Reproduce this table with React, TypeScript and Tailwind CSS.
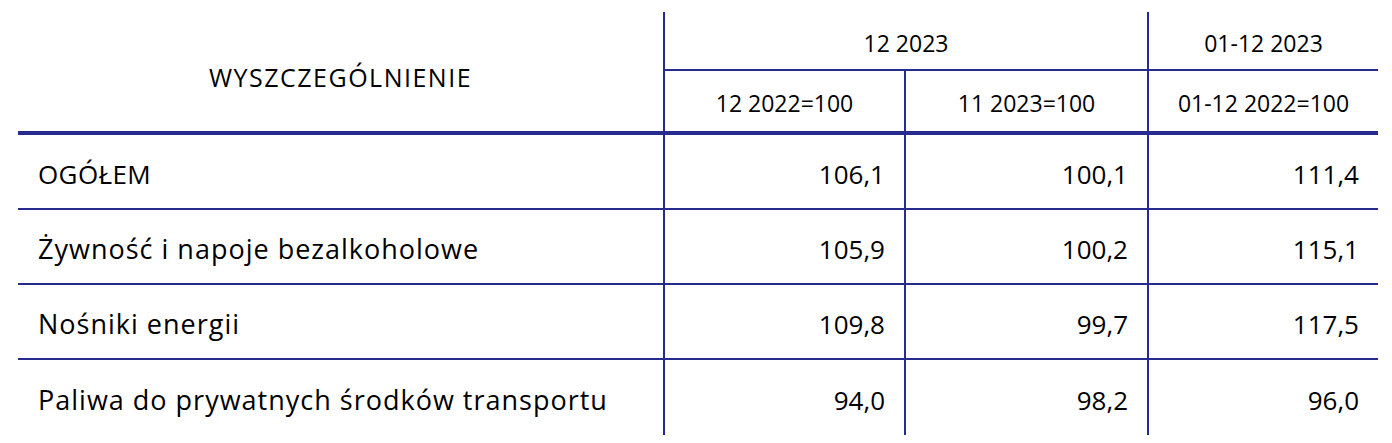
const rows = [
  { label: 'OGÓŁEM', a: '106,1', b: '100,1', c: '111,4', caps: true },
  { label: 'Żywność i napoje bezalkoholowe', a: '105,9', b: '100,2', c: '115,1' },
  { label: 'Nośniki energii', a: '109,8', b: '99,7', c: '117,5' },
  { label: 'Paliwa do prywatnych środków transportu', a: '94,0', b: '98,2', c: '96,0' },
];

export default function App() {
  return (
    <div className="w-[1392px] h-[443px] bg-white overflow-hidden pl-[18px] pt-[12px] text-black font-['Open_Sans',sans-serif]">
      <div className="grid w-[1360px] grid-cols-[645px_241px_243px_231px]">
        {/* header */}
        <div className="row-span-2 flex items-center justify-center border-b-4 border-[#272a8e] text-[25px] tracking-[1.5px] pt-[12px]">
          WYSZCZEGÓLNIENIE
        </div>
        <div className="col-span-2 h-[59px] flex items-center justify-center border-l-2 border-b-2 border-[#272a8e] text-[23px] pt-[6px]">
          12 2023
        </div>
        <div className="h-[59px] flex items-center justify-center border-l-2 border-b-2 border-[#272a8e] text-[23px] pt-[6px]">
          01-12 2023
        </div>
        <div className="h-[64px] flex items-center justify-center border-l-2 border-b-4 border-[#272a8e] text-[23px] pt-[4px]">
          12 2022=100
        </div>
        <div className="h-[64px] flex items-center justify-center border-l-2 border-b-4 border-[#272a8e] text-[23px] pt-[4px]">
          11 2023=100
        </div>
        <div className="h-[64px] flex items-center justify-center border-l-2 border-b-4 border-[#272a8e] text-[23px] pt-[4px]">
          01-12 2022=100
        </div>

        {/* body */}
        {rows.map((r, i) => {
          const line = i < rows.length - 1 ? 'border-b-2' : '';
          const labelSize = r.caps ? 'text-[26px] tracking-[0.4px]' : 'text-[27px] tracking-[1px]';
          return (
            <div key={i} className="contents">
              <div className={`h-[75px] flex items-center pl-[20px] pt-[5px] ${labelSize} border-[#272a8e] ${line}`}>{r.label}</div>
              <div className={`h-[75px] flex items-center justify-end pr-[19px] pt-[5px] text-[26px] border-l-2 border-[#272a8e] ${line}`}>{r.a}</div>
              <div className={`h-[75px] flex items-center justify-end pr-[19px] pt-[5px] text-[26px] border-l-2 border-[#272a8e] ${line}`}>{r.b}</div>
              <div className={`h-[75px] flex items-center justify-end pr-[19px] pt-[5px] text-[26px] border-l-2 border-[#272a8e] ${line}`}>{r.c}</div>
            </div>
          );
        })}
      </div>
    </div>
  );
}
